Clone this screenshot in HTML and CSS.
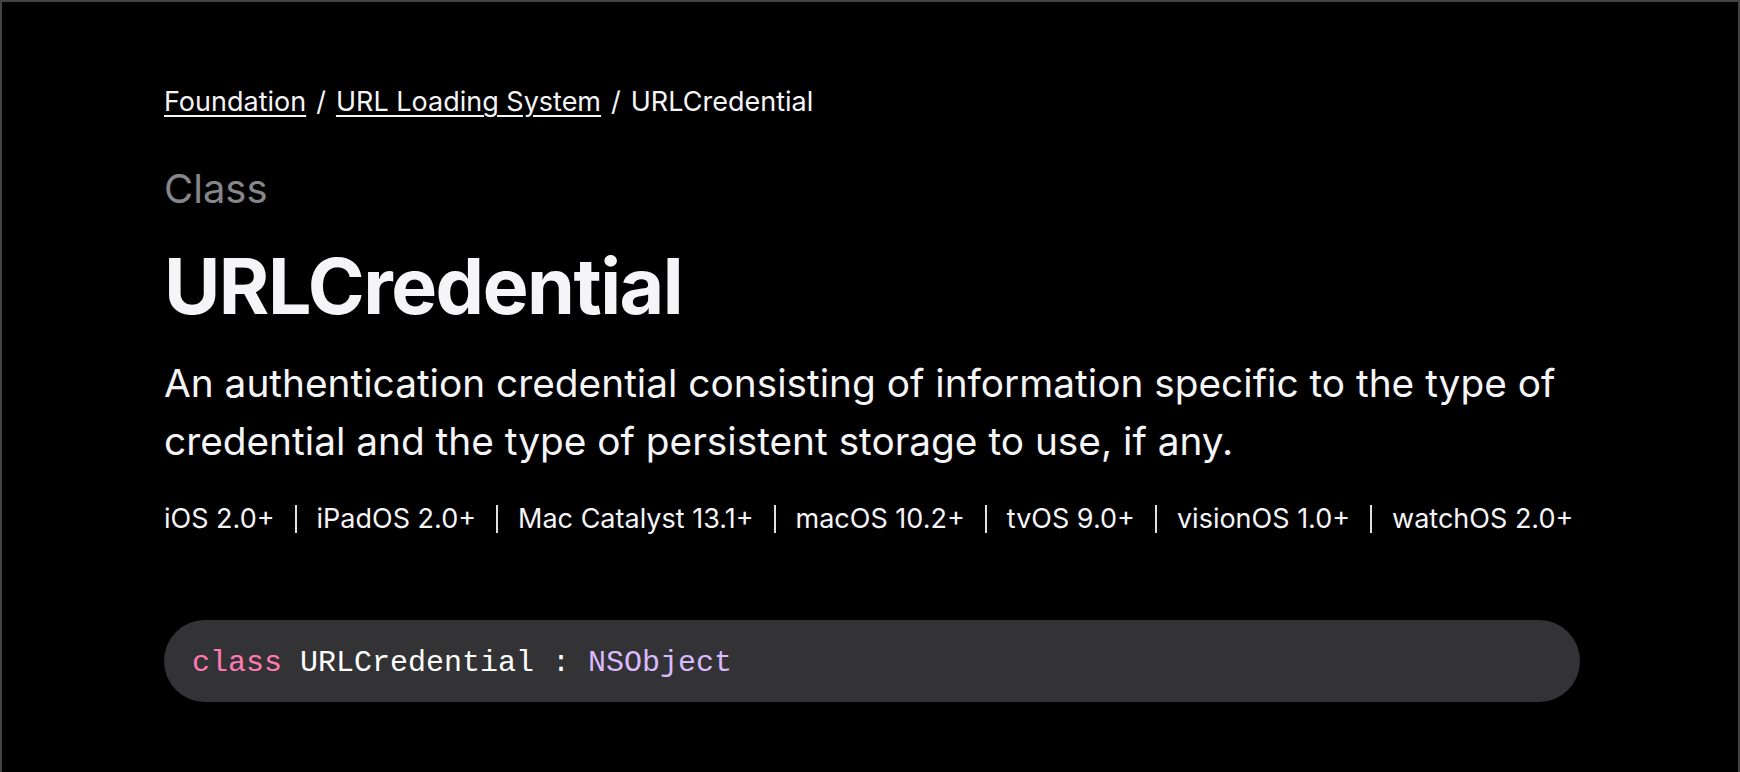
FILE: index.html
```html
<!DOCTYPE html>
<html lang="en">
<head>
<meta charset="utf-8">
<title>URLCredential | Apple Developer Documentation</title>
<link rel="stylesheet" href="styles.css">
</head>
<body>
<div class="page">
  <main class="content">
    <nav class="breadcrumbs">
      <a href="#" class="crumb-link">Foundation</a>
      <span class="crumb-sep">/</span>
      <a href="#" class="crumb-link">URL Loading System</a>
      <span class="crumb-sep">/</span>
      <span class="crumb-current">URLCredential</span>
    </nav>
    <div class="eyebrow">Class</div>
    <h1 class="title">URLCredential</h1>
    <p class="abstract">An authentication credential consisting of information specific to the type of credential and the type of persistent storage to use, if any.</p>
    <ul class="platforms">
      <li class="platform">iOS 2.0+</li>
      <li class="platform">iPadOS 2.0+</li>
      <li class="platform">Mac Catalyst 13.1+</li>
      <li class="platform">macOS 10.2+</li>
      <li class="platform">tvOS 9.0+</li>
      <li class="platform">visionOS 1.0+</li>
      <li class="platform">watchOS 2.0+</li>
    </ul>
    <div class="declaration">
      <code class="code"><span class="kw">class</span> URLCredential : <span class="type">NSObject</span></code>
    </div>
  </main>
</div>
</body>
</html>
```

FILE: styles.css
```css
html, body {
  margin: 0;
  padding: 0;
  background: #000;
}

.page {
  box-sizing: border-box;
  min-height: 100vh;
  border: 2px solid #434343;
  border-bottom: none;
  background: #000;
  font-family: Inter, "Noto Sans", "Liberation Sans", sans-serif;
  color: #f5f5f7;
}

.content {
  padding: 82px 158px 0 162px;
}

.breadcrumbs {
  display: flex;
  align-items: baseline;
  font-size: 27px;
  line-height: 36px;
  color: #f5f5f7;
}

.crumb-link {
  color: #f5f5f7;
  text-decoration: underline;
  text-decoration-thickness: 1.5px;
  text-underline-offset: 4px;
}

.crumb-sep {
  margin: 0 10px;
}

.eyebrow {
  margin-top: 46px;
  font-size: 40px;
  line-height: 46px;
  color: #86868b;
}

.title {
  margin: 29px 0 0;
  font-size: 77px;
  line-height: 90px;
  font-weight: 700;
  letter-spacing: -1.5px;
  color: #f5f5f7;
}

.abstract {
  margin: 23px 0 0;
  font-size: 38.8px;
  line-height: 58px;
  color: #f5f5f7;
}

.platforms {
  display: flex;
  align-items: center;
  list-style: none;
  margin: 31px 0 0;
  padding: 0;
  font-size: 27px;
  line-height: 36px;
  color: #f5f5f7;
}

.platform + .platform::before {
  content: "";
  display: inline-block;
  width: 2px;
  height: 28px;
  background: #e0e0e4;
  margin: 0 20px;
  vertical-align: -5px;
}

.declaration {
  display: flex;
  align-items: center;
  box-sizing: border-box;
  height: 82px;
  margin-top: 83px;
  padding: 4px 28px 0;
  border-radius: 41px;
  background: #333336;
}

.code {
  font-family: "Liberation Mono", "DejaVu Sans Mono", monospace;
  font-size: 30px;
  color: #ffffff;
  white-space: pre;
}

.kw {
  color: #ff7ab2;
}

.type {
  color: #dabaff;
}
```
